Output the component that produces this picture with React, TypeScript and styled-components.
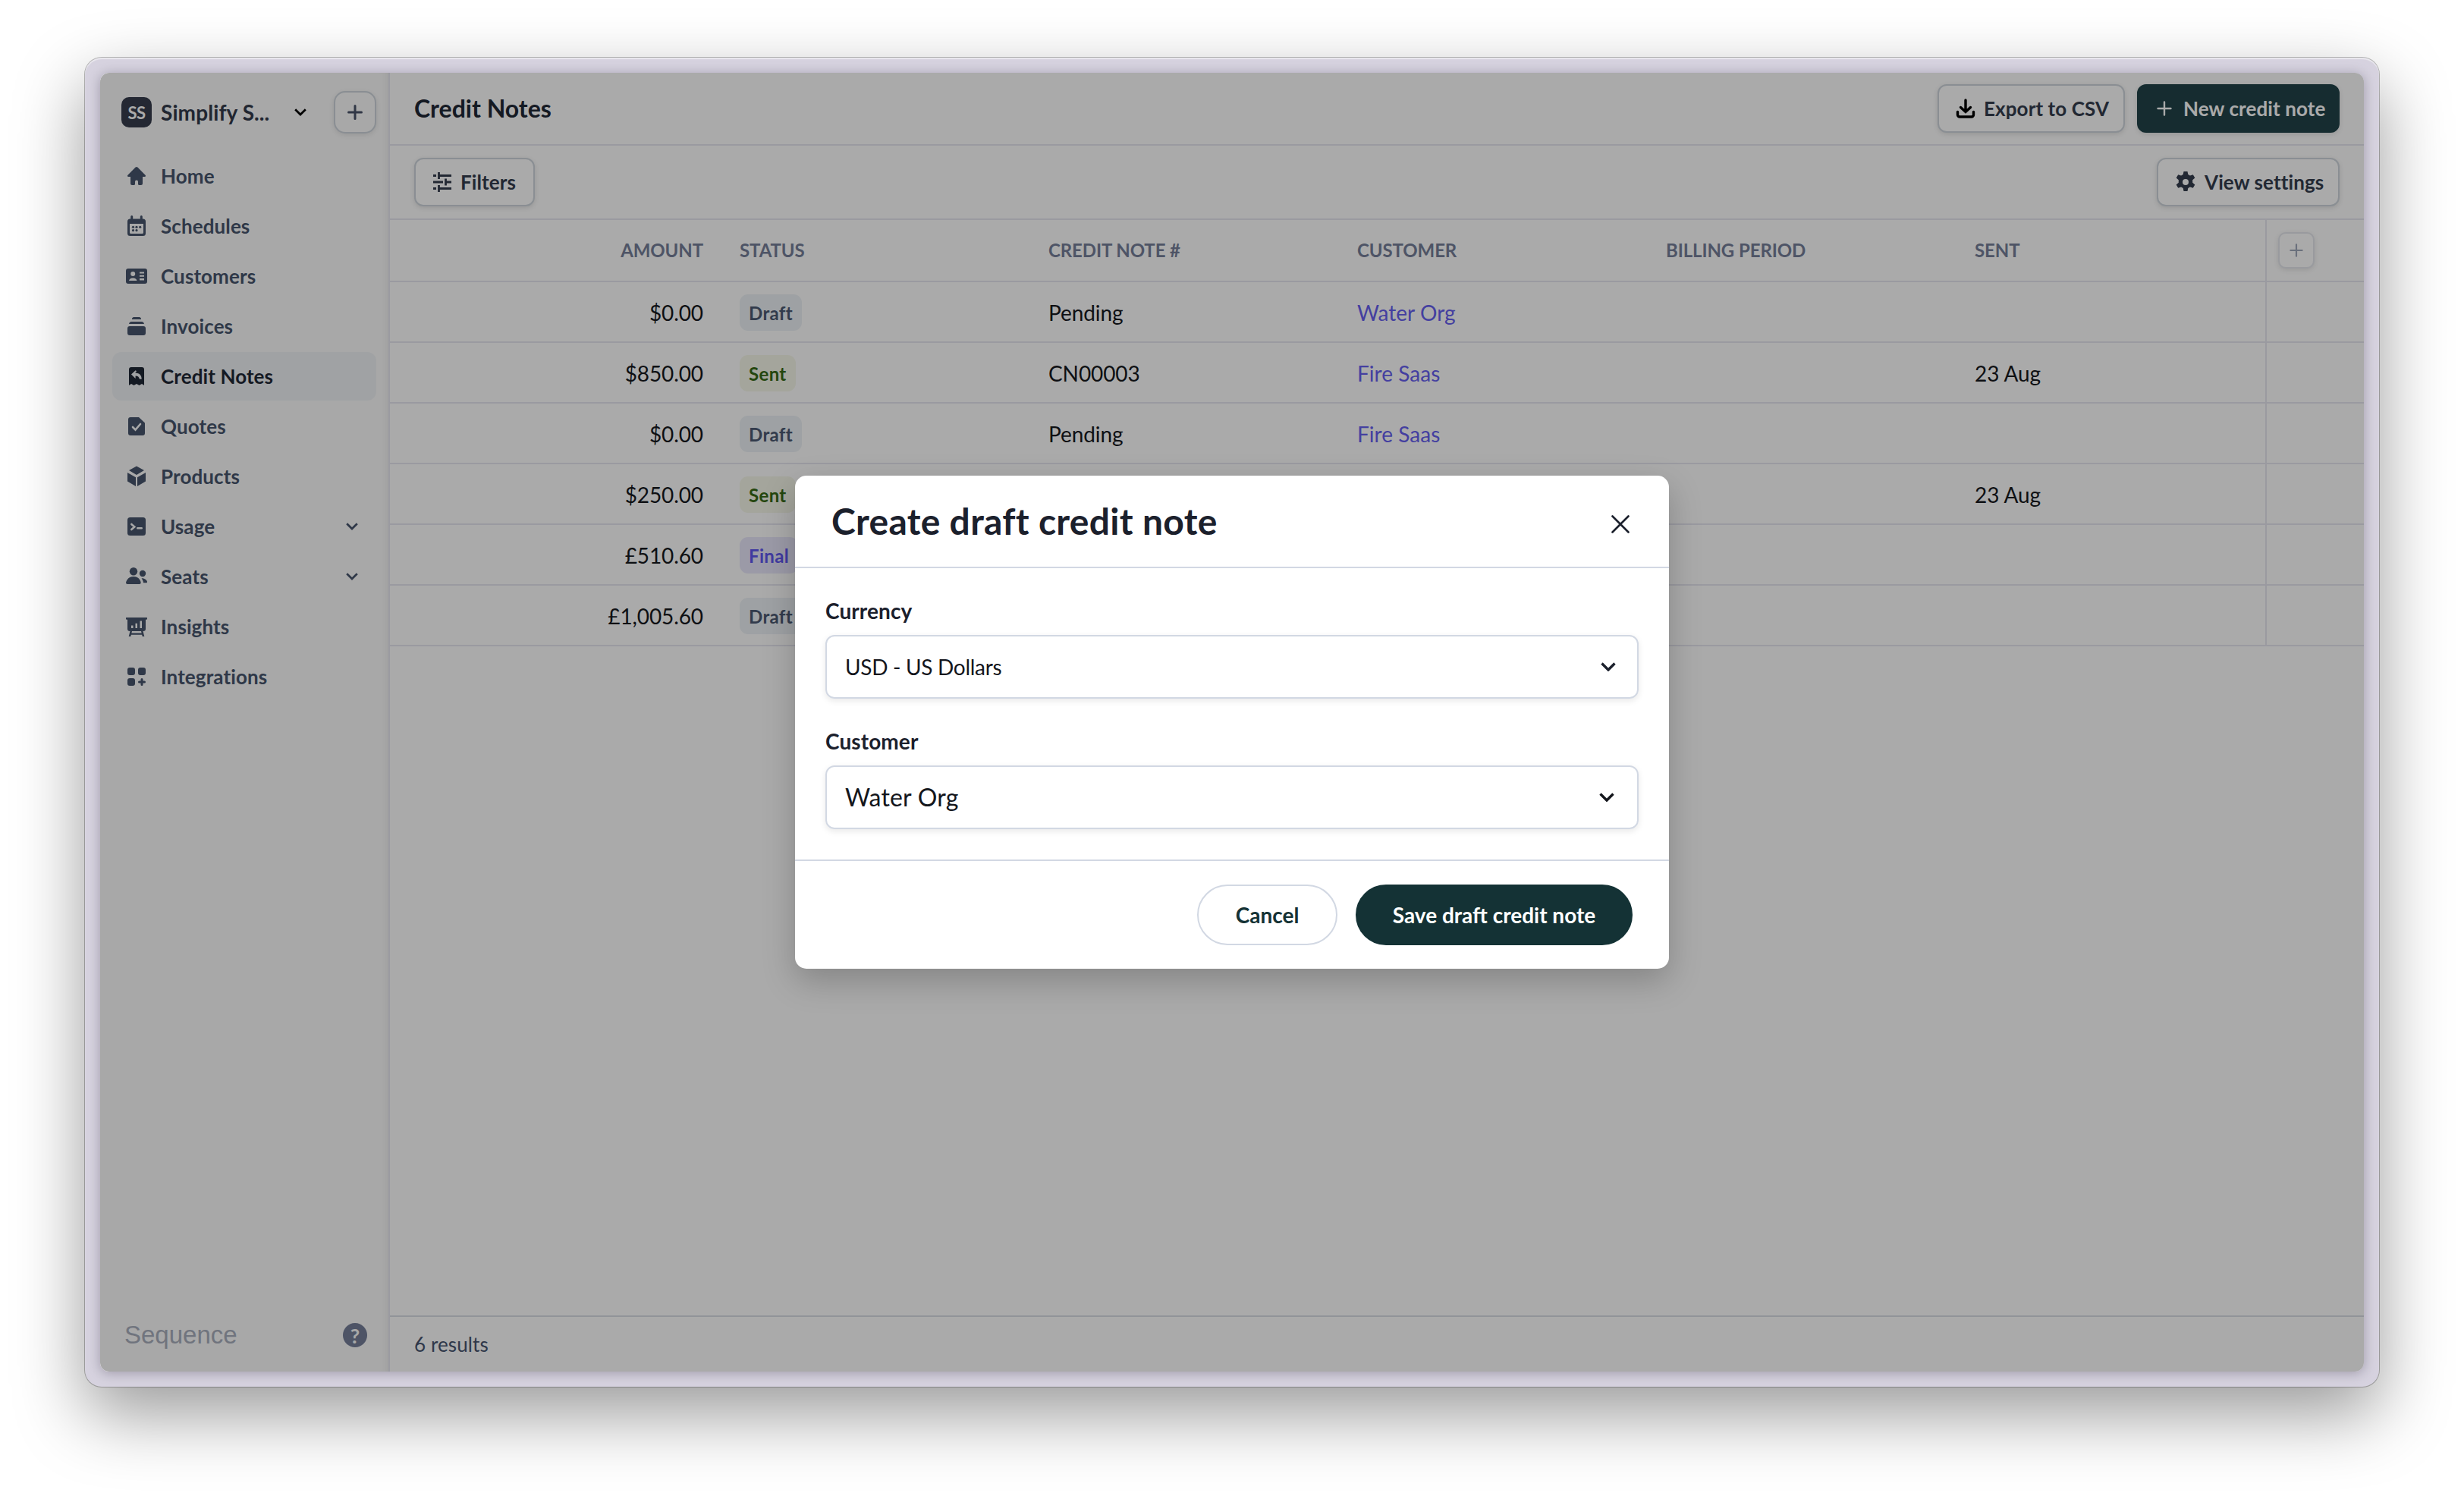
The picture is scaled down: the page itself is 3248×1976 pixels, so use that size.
import styled, { createGlobalStyle } from "styled-components"
import { ReactNode } from "react"

const GlobalStyle = createGlobalStyle`
  * {
    box-sizing: border-box;
  }
  body {
    margin: 0;
    background: #ffffff;
    font-family: Lato, "Liberation Sans", sans-serif;
  }
  button {
    font-family: inherit;
    margin: 0;
  }
`

const Desktop = styled.div`
  width: 3248px;
  height: 1976px;
  padding: 76px 112px;
  overflow: hidden;
  background: #ffffff;
`

const Frame = styled.div`
  width: 3024px;
  height: 1752px;
  padding: 20px;
  border-radius: 22px;
  background: #d6d2df;
  box-shadow: 0 0 0 1px rgba(0, 0, 0, 0.26), inset 0 2px 1px rgba(255, 255, 255, 0.5), 0 36px 92px rgba(0, 0, 0, 0.4);
`

const WindowShadow = styled.div`
  border-radius: 12px;
  box-shadow: 0 2px 16px rgba(10, 5, 25, 0.27);
`

const AppWindow = styled.div`
  position: relative;
  display: flex;
  width: 2984px;
  height: 1712px;
  border-radius: 12px;
  overflow: hidden;
  background: #ffffff;
`

const Sidebar = styled.aside`
  display: flex;
  flex-direction: column;
  width: 382px;
  border-right: 2px solid #e8e8f0;
  background: #fcfcfc;
  box-shadow: inset -8px 0 8px -6px rgba(0, 0, 0, 0.06);
`

const Workspace = styled.div`
  display: flex;
  align-items: center;
  justify-content: space-between;
  height: 56px;
  margin: 24px 16px 24px 28px;
`

const WorkspaceSwitch = styled.div`
  display: flex;
  align-items: center;
`

const Avatar = styled.div`
  display: flex;
  align-items: center;
  justify-content: center;
  width: 40px;
  height: 40px;
  border-radius: 10px;
  background: #363d4d;
  color: #ffffff;
  font-size: 22px;
  font-weight: 700;
  letter-spacing: -0.6px;
`

const WorkspaceName = styled.div`
  width: 176px;
  margin-left: 12px;
  color: #323a4a;
  font-size: 28px;
  font-weight: 700;
  letter-spacing: 0.1px;
  white-space: nowrap;
`

const IconButton = styled.button<{ $size: number; $muted?: boolean }>`
  display: flex;
  align-items: center;
  justify-content: center;
  width: ${prop => prop.$size}px;
  height: ${prop => prop.$size}px;
  padding: 0;
  border: 2px solid ${prop => (prop.$muted ? "#e6e8ee" : "#cfd6dd")};
  border-radius: ${prop => (prop.$muted ? 10 : 15)}px;
  background: ${prop => (prop.$muted ? "#ffffff" : "#fcfcfc")};
  color: ${prop => (prop.$muted ? "#a0a8ba" : "#4a5369")};
  box-shadow: 0 2px 6px rgba(0, 0, 0, 0.1);
`

const Nav = styled.nav`
  display: flex;
  flex-direction: column;
  flex: 1;
  gap: 2px;
  padding: 0 16px;
`

const NavItem = styled.a<{ $active?: boolean }>`
  display: flex;
  align-items: center;
  height: 64px;
  padding: 0 24px 0 16px;
  border-radius: 12px;
  background: ${prop => (prop.$active ? "#f1f3f6" : "transparent")};
  color: ${prop => (prop.$active ? "#1f2735" : "#47556c")};
  font-size: 26px;
  font-weight: 700;
  letter-spacing: 0.1px;
`

const NavIcon = styled.span`
  display: flex;
  justify-content: center;
  width: 32px;
  margin-right: 16px;
`

const NavLabel = styled.span`
  flex: 1;
`

const SidebarFooter = styled.div`
  display: flex;
  align-items: center;
  justify-content: space-between;
  height: 96px;
  padding: 0 28px 0 32px;
`

const Brand = styled.span`
  color: #a9afbd;
  font-family: "Liberation Sans", sans-serif;
  font-size: 33px;
`

const Help = styled.span`
  display: flex;
  align-items: center;
  justify-content: center;
  width: 32px;
  height: 32px;
  border-radius: 50%;
  background: #757f9a;
  color: #fcfcfc;
  font-size: 27px;
  font-weight: 700;
`

const Main = styled.main`
  display: flex;
  flex-direction: column;
  flex: 1;
`

const Bar = styled.header<{ $height: number }>`
  display: flex;
  align-items: center;
  justify-content: space-between;
  height: ${prop => prop.$height}px;
  padding: 0 32px;
  border-bottom: 2px solid #e8e8f0;
`

const PageTitle = styled.h1`
  margin: 0;
  color: #1f2735;
  font-size: 32px;
  font-weight: 700;
  line-height: 40px;
`

const Actions = styled.div`
  display: flex;
  gap: 16px;
`

const Button = styled.button<{ $primary?: boolean; $width: number }>`
  display: flex;
  align-items: center;
  gap: ${prop => (prop.$primary ? 15 : 11)}px;
  width: ${prop => prop.$width}px;
  height: 64px;
  padding: 0 0 0 ${prop => (prop.$primary ? 24 : 22)}px;
  border: 2px solid ${prop => (prop.$primary ? "#214349" : "#cfd6dd")};
  border-radius: 12px;
  background: ${prop => (prop.$primary ? "#214349" : "#ffffff")};
  color: ${prop => (prop.$primary ? "#ffffff" : "#343c4d")};
  font-size: 26px;
  font-weight: 700;
  letter-spacing: 0.1px;
  white-space: nowrap;
  box-shadow: 0 2px 6px rgba(0, 0, 0, 0.12);
`

const Row = styled.div<{ $head?: boolean }>`
  display: grid;
  grid-template-columns: 437px repeat(5, 407px) 1fr;
  height: ${prop => (prop.$head ? 82 : 80)}px;
  border-bottom: 2px solid #e8e8f0;
  color: ${prop => (prop.$head ? "#757f9a" : "#16181d")};
  font-size: ${prop => (prop.$head ? 24 : 28)}px;
  font-weight: ${prop => (prop.$head ? 700 : 400)};
  letter-spacing: -0.1px;
`

const Cell = styled.div<{ $right?: boolean; $head?: boolean }>`
  display: flex;
  align-items: center;
  justify-content: ${prop => (prop.$right ? "flex-end" : "flex-start")};
  padding: ${prop => (prop.$head ? "0 24px 2px" : "2px 24px 0")};
`

const EndCell = styled.div`
  display: flex;
  align-items: center;
  padding-left: 15px;
  border-left: 2px solid #e8e8f0;
`

const CustomerLink = styled.a`
  color: #665ff0;
  letter-spacing: 0.05px;
`

const badgeColors = {
  Draft: ["#eef2f6", "#4c5972"],
  Sent: ["#f7f8ea", "#366a16"],
  Final: ["#e9e8fb", "#6158f0"],
}

const Badge = styled.span<{ $kind: keyof typeof badgeColors }>`
  display: flex;
  align-items: center;
  height: 48px;
  padding: 0 12px;
  border-radius: 11px;
  background: ${prop => badgeColors[prop.$kind][0]};
  color: ${prop => badgeColors[prop.$kind][1]};
  font-size: 24px;
  font-weight: 700;
  letter-spacing: 0.35px;
`

const Results = styled.footer`
  display: flex;
  align-items: center;
  height: 74px;
  margin-top: auto;
  padding: 0 32px;
  border-top: 2px solid #dadfe6;
  color: #475570;
  font-size: 26px;
  letter-spacing: 0.1px;
`

const Overlay = styled.div`
  position: absolute;
  inset: 0;
  display: flex;
  align-items: center;
  justify-content: center;
  background: rgba(0, 0, 0, 0.333);
`

const Modal = styled.section`
  display: flex;
  flex-direction: column;
  width: 1152px;
  height: 650px;
  border-radius: 15px;
  background: #ffffff;
  box-shadow: 0 16px 44px rgba(0, 0, 0, 0.22);
`

const ModalHeader = styled.div`
  display: flex;
  align-items: center;
  justify-content: space-between;
  height: 122px;
  padding: 0 52px 0 48px;
  border-bottom: 2px solid #d2d8e3;
`

const ModalTitle = styled.h2`
  margin: 0 0 2px;
  color: #1b202c;
  font-size: 48px;
  font-weight: 700;
  letter-spacing: 0.3px;
`

const CloseButton = styled.button`
  display: flex;
  padding: 8px 0 0;
  border: 0;
  background: none;
`

const ModalBody = styled.div`
  display: flex;
  flex-direction: column;
  gap: 40px;
  flex: 1;
  padding: 40px 40px 0;
`

const Field = styled.label`
  display: flex;
  flex-direction: column;
  gap: 16px;
  color: #1b202c;
  font-size: 28px;
  font-weight: 700;
  letter-spacing: 0.1px;
  line-height: 32px;
`

const Select = styled.div<{ $large?: boolean }>`
  display: flex;
  align-items: center;
  justify-content: space-between;
  height: 84px;
  padding: 0 ${prop => (prop.$large ? 30 : 28)}px 0 24px;
  border: 2px solid #d2d8e3;
  border-radius: 12px;
  color: #14161c;
  font-size: ${prop => (prop.$large ? 32 : 28)}px;
  font-weight: 400;
  letter-spacing: ${prop => (prop.$large ? 0.2 : -0.3)}px;
  box-shadow: 0 3px 8px rgba(0, 0, 0, 0.09);
`

const ModalFooter = styled.div`
  display: flex;
  align-items: center;
  justify-content: flex-end;
  gap: 24px;
  height: 144px;
  padding: 0 48px;
  border-top: 2px solid #d2d8e3;
`

const PillButton = styled.button<{ $primary?: boolean; $width: number }>`
  width: ${prop => prop.$width}px;
  height: 80px;
  padding: 0;
  border: 2px solid ${prop => (prop.$primary ? "#143235" : "#d2d8e3")};
  border-radius: 40px;
  background: ${prop => (prop.$primary ? "#143235" : "#ffffff")};
  color: ${prop => (prop.$primary ? "#ffffff" : "#143235")};
  font-size: 28px;
  font-weight: 700;
`

const Chevron = ({ color = "currentColor", w = 20 }: { color?: string; w?: number }) => (
  <svg width={w} height={w * 0.6} viewBox="0 0 20 12" fill="none">
    <path d="M1.500 1.500 10 10l8.500-8.500" stroke={color} strokeWidth="3.400" />
  </svg>
)

const Plus = ({ size = 20, stroke = 3 }: { size?: number; stroke?: number }) => (
  <svg width={size} height={size} viewBox="0 0 20 20" fill="none" stroke="currentColor" strokeWidth={stroke} strokeLinecap="round">
    <path d="M10 1.500v17M1.500 10h17" />
  </svg>
)

// every sidebar glyph lives on a 28px grid
const icons: Record<string, ReactNode> = {
  Home: <path d="M12.600 2.600a2 2 0 0 1 2.800 0L25.500 12.800c1 1 .5 2.200-.7 2.200H22v9a2 2 0 0 1-2 2h-2.400a1.600 1.600 0 0 1-1.600-1.600V21.500a2 2 0 0 0-4 0v2.900a1.600 1.600 0 0 1-1.600 1.600H8a2 2 0 0 1-2-2v-9H3.200c-1.200 0-1.700-1.200-.7-2.200z" />,
  Schedules: (
    <>
      <path fillRule="evenodd" d="M6.200 1.500a1.500 1.500 0 0 1 3 0V4.500h9.600v-3a1.500 1.500 0 0 1 3 0v3h.7A3.500 3.500 0 0 1 26 8v15.500a3.500 3.500 0 0 1-3.500 3.500h-17A3.500 3.500 0 0 1 2 23.500V8a3.500 3.500 0 0 1 3.500-3.500h.7zM5 11v11.500A1.500 1.500 0 0 0 6.500 24h15a1.500 1.500 0 0 0 1.500-1.500V11z" />
      <circle cx="9.500" cy="15.300" r="1.600" />
      <circle cx="14" cy="15.300" r="1.600" />
      <circle cx="18.700" cy="15.300" r="1.600" />
      <circle cx="9.500" cy="19.700" r="1.600" />
      <circle cx="14" cy="19.700" r="1.600" />
    </>
  ),
  Customers: (
    <path fillRule="evenodd" d="M3 4h22a3 3 0 0 1 3 3v14a3 3 0 0 1-3 3H3a3 3 0 0 1-3-3V7a3 3 0 0 1 3-3zM9.200 8a3 3 0 1 0 0 6 3 3 0 0 0 0-6zM4 20h10.500c-.6-2.400-2-3.600-5.300-3.600S4.600 17.600 4 20zM18 8.500v2h6v-2zm0 4.200v2h6v-2zm0 4.200v2.600h6v-2.600z" />
  ),
  Invoices: (
    <path d="M8 4c.6-1.500 1.500-2 3-2h6c1.500 0 2.400.5 3 2v1H8zM4 11c.4-2 1.500-3 3.500-3h13c2 0 3.100 1 3.500 3zM5 14h18a3 3 0 0 1 3 3v6a3 3 0 0 1-3 3H5a3 3 0 0 1-3-3v-6a3 3 0 0 1 3-3z" />
  ),
  "Credit Notes": (
    <path fillRule="evenodd" d="M7 2h14a3 3 0 0 1 3 3v21l-3-2-3.500 2-3.500-2-3.500 2-3.500-2-3 2V5a3 3 0 0 1 3-3zM12.600 6.200 7 11.600l5.600 5.400v-3.500c3.200 0 4.600 1.500 5.400 4.300h2.700c0-5-3-8-8.100-8.200V8.500l1.600-1.200z" />
  ),
  Quotes: (
    <>
      <path d="M6 2h11l8 7.500V23a3 3 0 0 1-3 3H6a3 3 0 0 1-3-3V5a3 3 0 0 1 3-3z" />
      <path d="m9 15 3.500 3.500 6.500-7.500" fill="none" stroke="#fcfcfc" strokeWidth="2.600" strokeLinecap="round" />
    </>
  ),
  Products: (
    <path d="M14 .5 24 6 14 12 4 6zM2 9l11 6.200V27L2 20.500zM26 9l-11 6.200V27l11-6.500z" />
  ),
  Usage: (
    <>
      <rect x="2" y="2" width="24" height="24" rx="3.500" />
      <path d="m7.300 11 4 3.500-4 3.500M15.300 16.300h5.400" fill="none" stroke="#fcfcfc" strokeWidth="2.600" strokeLinecap="round" />
    </>
  ),
  Seats: (
    <>
      <circle cx="10" cy="7.200" r="5.200" />
      <circle cx="22" cy="10" r="4.200" />
      <path d="M0 22c1-4.500 4.600-8 10-8s9 3.500 9.700 8c0 1.200-.7 2-1.900 2H2C.8 24 0 23.200 0 22zM20.500 16.200c4 0 6.500 1.600 7.500 4.300.3 1-.4 1.800-1.400 1.800H23c-.2-2.400-1.300-4.600-2.500-6.100z" />
    </>
  ),
  Insights: (
    <path fillRule="evenodd" d="M1 2h26a1.300 1.300 0 0 1 0 2.700h-1V17a3 3 0 0 1-3 3h-.5l1.800 7h-2.600l-.6-2.200H6.900L6.300 27H3.700l1.800-7H5a3 3 0 0 1-3-3V4.700H1A1.300 1.300 0 0 1 1 2zM7 12.500v3.500h2.500v-3.500zm5.500-2.700V16H15V9.800zM18.500 6.500V16H21V6.500zM8 20l-.6 2.500h13.200L20 20z" />
  ),
  Integrations: (
    <>
      <rect x="2" y="2" width="10" height="10" rx="3" />
      <rect x="16" y="2" width="10" height="10" rx="3" />
      <rect x="2" y="16" width="10" height="10" rx="3" />
      <path d="M21 17.500v7M17.500 21h7" stroke="currentColor" strokeWidth="3" strokeLinecap="round" />
    </>
  ),
}

const GlyphIcon = ({ name }: { name: string }) => (
  <svg width="28" height="28" viewBox="0 0 28 28" fill="currentColor">
    {icons[name]}
  </svg>
)

const FiltersIcon = () => (
  <svg width="26" height="26" viewBox="0 0 26 26" fill="none" stroke="currentColor" strokeWidth="2.800">
    <path d="M1 4.500h4M8 4.500h17M8.500 0v9M1 13h13M18 13h7M17.500 8.500v9M1 21.500h4M8 21.500h17M8.500 17v9" />
  </svg>
)

const DownloadIcon = () => (
  <svg width="26" height="26" viewBox="0 0 26 26" fill="none" stroke="#000000" strokeWidth="3.400" strokeLinecap="round">
    <path d="M13 2v15.500M6.500 11.500l6.500 6 6.500-6M2.500 17.500v3.700A2.800 2.800 0 0 0 5.300 24h15.400a2.800 2.800 0 0 0 2.800-2.800v-3.700" />
  </svg>
)

const GearIcon = () => (
  <svg width="28" height="28" viewBox="0 0 28 28" fill="currentColor">
    <path fillRule="evenodd" d="M11.500 0h5l.8 4 2.600 1.500 3.900-1.300 2.500 4.300-3.100 2.700v3.600l3.100 2.700-2.500 4.300-3.900-1.300-2.600 1.500-.8 4h-5l-.8-4-2.600-1.500-3.900 1.300-2.500-4.300 3.100-2.700v-3.600L1.700 8.500l2.500-4.300 3.900 1.300L10.700 4zM14 10a4 4 0 1 0 0 8 4 4 0 0 0 0-8z" />
  </svg>
)

const CloseIcon = () => (
  <svg width="24" height="24" viewBox="0 0 24 24" fill="none" stroke="#1b202c" strokeWidth="2.600" strokeLinecap="round">
    <path d="m1.500 1.500 21 21M22.500 1.500l-21 21" />
  </svg>
)

const navItems = ["Home", "Schedules", "Customers", "Invoices", "Credit Notes", "Quotes", "Products", "Usage", "Seats", "Insights", "Integrations"]
const expandable = ["Usage", "Seats"]

const columns = ["STATUS", "CREDIT NOTE #", "CUSTOMER", "BILLING PERIOD", "SENT"]

type CreditNote = {
  amount: string
  status: keyof typeof badgeColors
  number: string
  customer: string
  sent?: string
}

const creditNotes: CreditNote[] = [
  { amount: "$0.00", status: "Draft", number: "Pending", customer: "Water Org" },
  { amount: "$850.00", status: "Sent", number: "CN00003", customer: "Fire Saas", sent: "23 Aug" },
  { amount: "$0.00", status: "Draft", number: "Pending", customer: "Fire Saas" },
  { amount: "$250.00", status: "Sent", number: "", customer: "", sent: "23 Aug" },
  { amount: "£510.60", status: "Final", number: "", customer: "" },
  { amount: "£1,005.60", status: "Draft", number: "", customer: "" },
]

const App = () => {
  return (
    <Desktop>
      <GlobalStyle />
      <Frame>
        <WindowShadow>
          <AppWindow>
            <Sidebar>
              <Workspace>
                <WorkspaceSwitch>
                  <Avatar>SS</Avatar>
                  <WorkspaceName>Simplify S...</WorkspaceName>
                  <Chevron color="#000000" w={16} />
                </WorkspaceSwitch>
                <IconButton $size={56}><Plus /></IconButton>
              </Workspace>
              <Nav>
                {navItems.map(item => (
                  <NavItem key={item} $active={item === "Credit Notes"}>
                    <NavIcon><GlyphIcon name={item} /></NavIcon>
                    <NavLabel>{item}</NavLabel>
                    {expandable.includes(item) && <Chevron w={16} />}
                  </NavItem>
                ))}
              </Nav>
              <SidebarFooter>
                <Brand>Sequence</Brand>
                <Help>?</Help>
              </SidebarFooter>
            </Sidebar>
            <Main>
              <Bar $height={96}>
                <PageTitle>Credit Notes</PageTitle>
                <Actions>
                  <Button $width={247}><DownloadIcon />Export to CSV</Button>
                  <Button $width={267} $primary><Plus stroke={2.4} />New credit note</Button>
                </Actions>
              </Bar>
              <Bar $height={98}>
                <Button $width={159}><FiltersIcon />Filters</Button>
                <Button $width={241}><GearIcon />View settings</Button>
              </Bar>
              <Row $head>
                <Cell $head $right>AMOUNT</Cell>
                {columns.map(column => <Cell $head key={column}>{column}</Cell>)}
                <EndCell><IconButton $size={48} $muted><Plus size={18} stroke={2.4} /></IconButton></EndCell>
              </Row>
              {creditNotes.map((note, i) => (
                <Row key={i}>
                  <Cell $right>{note.amount}</Cell>
                  <Cell><Badge $kind={note.status}>{note.status}</Badge></Cell>
                  <Cell>{note.number}</Cell>
                  <Cell><CustomerLink>{note.customer}</CustomerLink></Cell>
                  <Cell />
                  <Cell>{note.sent}</Cell>
                  <EndCell />
                </Row>
              ))}
              <Results>6 results</Results>
            </Main>
            <Overlay>
              <Modal>
                <ModalHeader>
                  <ModalTitle>Create draft credit note</ModalTitle>
                  <CloseButton><CloseIcon /></CloseButton>
                </ModalHeader>
                <ModalBody>
                  <Field>
                    Currency
                    <Select>USD - US Dollars<Chevron color="#1b202c" /></Select>
                  </Field>
                  <Field>
                    Customer
                    <Select $large>Water Org<Chevron color="#14161c" /></Select>
                  </Field>
                </ModalBody>
                <ModalFooter>
                  <PillButton $width={185}>Cancel</PillButton>
                  <PillButton $width={365} $primary>Save draft credit note</PillButton>
                </ModalFooter>
              </Modal>
            </Overlay>
          </AppWindow>
        </WindowShadow>
      </Frame>
    </Desktop>
  )
}

export default App
